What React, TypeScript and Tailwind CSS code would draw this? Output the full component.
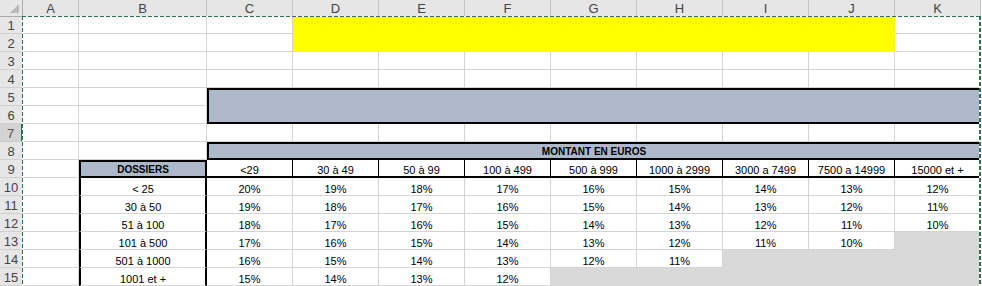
import React from 'react';

const COLS = ['A', 'B', 'C', 'D', 'E', 'F', 'G', 'H', 'I', 'J', 'K'];
const RANGES = ['<29', '30 à 49', '50 à 99', '100 à 499', '500 à 999', '1000 à 2999', '3000 a 7499', '7500 a 14999', '15000 et +'];

// null = greyed out cell
const RATES: { label: string; values: (number | null)[] }[] = [
  { label: '< 25', values: [20, 19, 18, 17, 16, 15, 14, 13, 12] },
  { label: '30 à 50', values: [19, 18, 17, 16, 15, 14, 13, 12, 11] },
  { label: '51 à 100', values: [18, 17, 16, 15, 14, 13, 12, 11, 10] },
  { label: '101 à 500', values: [17, 16, 15, 14, 13, 12, 11, 10, null] },
  { label: '501 à 1000', values: [16, 15, 14, 13, 12, 11, null, null, null] },
  { label: '1001 et +', values: [15, 14, 13, 12, null, null, null, null, null] },
];

const cellText = "flex items-end justify-center text-[11px] leading-[10px] text-black";
const blank = "border-r border-b border-[#d4d4d4] bg-white";

const RowHead = ({ n, active = false }: { n: number; active?: boolean }) => (
  <div
    className={
      active
        ? "flex items-end justify-center pb-[1px] text-[13px] leading-[13px] text-[#555] bg-[#d3d3d3] border-b border-[#c8c8c8] border-r-2 border-r-[#217346]"
        : "flex items-end justify-center pb-[1px] text-[13px] leading-[13px] text-[#444] bg-[#e6e6e6] border-b border-[#d0d0d0] border-r border-r-[#ababab]"
    }
  >
    {n}
  </div>
);

const Blanks = ({ count }: { count: number }) => (
  <>
    {Array.from({ length: count }).map((_, i) => (
      <div key={i} className={blank} />
    ))}
  </>
);

export default function App() {
  return (
    <div className="relative w-[982px] h-[286px] overflow-hidden bg-white font-['Liberation_Sans',Arial,sans-serif]">
      <div className="grid grid-cols-[23px_56px_128px_repeat(9,86px)] grid-rows-[17px_17px_repeat(14,18px)]">
        {/* column headers */}
        <div className="relative bg-[#e6e6e6] border-r border-b border-[#ababab]">
          <svg className="absolute right-[3px] bottom-[3px]" width="9" height="9" viewBox="0 0 9 9">
            <polygon points="9,0 9,9 0,9" fill="#b9b9b9" />
          </svg>
        </div>
        {COLS.map((c) => (
          <div
            key={c}
            className="flex items-center justify-center text-[13px] leading-none text-[#444] bg-[#e6e6e6] border-r border-[#c4c4c4] border-b border-b-[#ababab]"
          >
            {c}
          </div>
        ))}

        {/* rows 1-2 */}
        <RowHead n={1} />
        <Blanks count={3} />
        <div className="col-span-7 row-span-2 bg-[#ffff00]" />
        <div className={blank} />
        <RowHead n={2} />
        <Blanks count={3} />
        <div className={blank} />

        {/* rows 3-4 */}
        <RowHead n={3} />
        <Blanks count={11} />
        <RowHead n={4} />
        <Blanks count={11} />

        {/* rows 5-6 */}
        <RowHead n={5} />
        <Blanks count={2} />
        <div className="col-span-9 row-span-2 bg-[#adb9ca] border-2 border-black" />
        <RowHead n={6} />
        <Blanks count={2} />

        {/* row 7 */}
        <RowHead n={7} active />
        <Blanks count={11} />

        {/* row 8 */}
        <RowHead n={8} />
        <Blanks count={2} />
        <div className="col-span-9 flex items-end justify-center bg-[#adb9ca] border-2 border-black font-bold text-[10px] leading-[10px] pb-[1px]">
          MONTANT EN EUROS
        </div>

        {/* row 9 */}
        <RowHead n={9} />
        <div className={blank} />
        <div className="flex items-end justify-center bg-[#adb9ca] border-2 border-black font-bold text-[10px] leading-[10px] pb-[1px]">
          DOSSIERS
        </div>
        {RANGES.map((r) => (
          <div key={r} className={`${cellText} pb-[1px] bg-white border-r border-black border-b-2`}>
            {r}
          </div>
        ))}

        {/* rows 10-15 */}
        {RATES.map((row, i) => (
          <React.Fragment key={row.label}>
            <RowHead n={10 + i} />
            <div className={blank} />
            <div className={`${cellText} pb-[1px] bg-white border-x-2 border-x-black border-b border-b-[#d4d4d4]`}>
              {row.label}
            </div>
            {row.values.map((v, j) =>
              v === null ? (
                <div key={j} className="bg-[#d9d9d9]" />
              ) : (
                <div key={j} className={`${cellText} pb-[1px] ${blank}`}>
                  {v}%
                </div>
              )
            )}
          </React.Fragment>
        ))}
      </div>

      {/* page-break dashed lines */}
      <div className="absolute left-[22px] top-[16px] w-[959px] h-[1px] bg-[repeating-linear-gradient(90deg,#2f6f4c_0_4px,#ffffff_4px_6px)]" />
      <div className="absolute left-[22px] top-[16px] w-[1px] h-[270px] bg-[repeating-linear-gradient(180deg,#2f6f4c_0_4px,#ffffff_4px_6px)]" />
      <div className="absolute left-[979px] top-[16px] w-[2px] h-[270px] bg-[repeating-linear-gradient(180deg,#2f6f4c_0_4px,#ffffff_4px_6px)]" />
    </div>
  );
}
